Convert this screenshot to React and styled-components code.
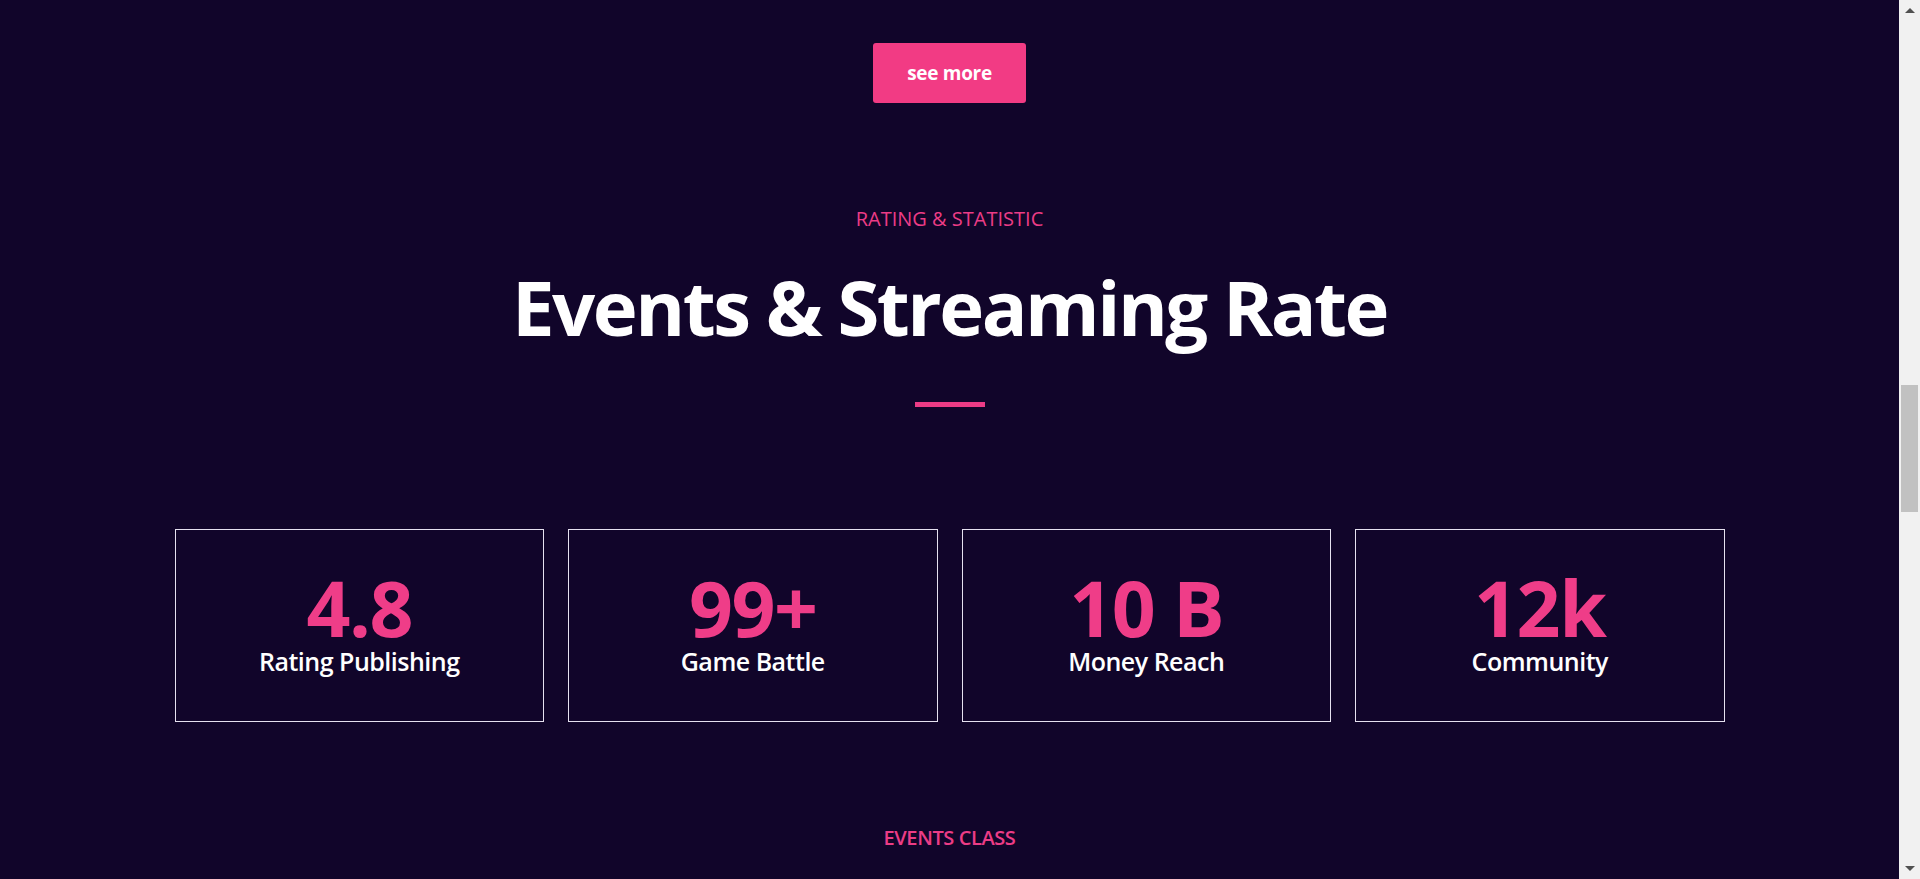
import React from "react";
import styled, { createGlobalStyle } from "styled-components";

const stats = [
  { value: "4.8", label: "Rating Publishing" },
  { value: "99+", label: "Game Battle" },
  { value: "10 B", label: "Money Reach" },
  { value: "12k", label: "Community" },
];

export default function App() {
  return (
    <>
      <GlobalStyle />
      <Page>
        <Main>
          <SeeMore>see more</SeeMore>

          <Eyebrow $gap={106}>RATING &amp; STATISTIC</Eyebrow>
          <Title>Events &amp; Streaming Rate</Title>
          <Divider />

          <StatGrid>
            {stats.map((s) => (
              <StatCard key={s.label}>
                <StatValue>{s.value}</StatValue>
                <StatLabel>{s.label}</StatLabel>
              </StatCard>
            ))}
          </StatGrid>

          <Eyebrow $gap={106} $bold>EVENTS CLASS</Eyebrow>
        </Main>

        <ScrollBar>
          <ScrollArrow $dir="up" />
          <ScrollTrack>
            <ScrollThumb />
          </ScrollTrack>
          <ScrollArrow $dir="down" />
        </ScrollBar>
      </Page>
    </>
  );
}

// Styled components
const GlobalStyle = createGlobalStyle`
  html, body {
    margin: 0;
    padding: 0;
    background: #11052a;
    overflow: hidden;
  }
  * {
    box-sizing: border-box;
  }
`;

const Page = styled.div`
  display: flex;
  height: 100vh;
  background: #11052a;
  font-family: "Open Sans", "Noto Sans", sans-serif;
  overflow: hidden;
`;

const Main = styled.main`
  flex: 1;
  display: flex;
  flex-direction: column;
  align-items: center;
  padding-top: 43px;
  overflow: hidden;
`;

const SeeMore = styled.button`
  width: 153px;
  height: 60px;
  border: none;
  border-radius: 3px;
  background: #f23b84;
  color: #fff;
  font-family: inherit;
  font-size: 19px;
  letter-spacing: -0.3px;
  font-weight: 700;
  cursor: pointer;
`;

const Eyebrow = styled.p`
  margin: ${(p) => p.$gap}px 0 0;
  font-size: 20px;
  line-height: 1;
  font-weight: ${(p) => (p.$bold ? 600 : 500)};
  letter-spacing: ${(p) => (p.$bold ? "-0.4px" : "0")};
  color: #ec3c86;
`;

const Title = styled.h2`
  margin: 40px 0 0;
  font-size: 76px;
  line-height: 1;
  font-weight: 700;
  letter-spacing: -2.5px;
  color: #fff;
`;

const Divider = styled.span`
  display: block;
  width: 70px;
  height: 5px;
  margin-top: 57px;
  background: #ec3c86;
`;

const StatGrid = styled.div`
  display: grid;
  grid-template-columns: repeat(4, 1fr);
  gap: 24px;
  width: 1550px;
  margin-top: 122px;
`;

const StatCard = styled.div`
  height: 193px;
  display: flex;
  flex-direction: column;
  align-items: center;
  justify-content: center;
  gap: 3px;
  padding-bottom: 8px;
  border: 1px solid #e6e1f0;
`;

const StatValue = styled.span`
  font-size: 77px;
  line-height: 1;
  font-weight: 700;
  letter-spacing: -1.5px;
  color: #ef3d88;
`;

const StatLabel = styled.span`
  font-size: 25px;
  line-height: 1;
  font-weight: 600;
  letter-spacing: -0.5px;
  color: #fff;
`;

const ScrollBar = styled.aside`
  width: 21px;
  flex-shrink: 0;
  display: flex;
  flex-direction: column;
  background: #f1f1f1;
`;

const ScrollArrow = styled.div`
  height: 21px;
  display: flex;
  align-items: center;
  justify-content: center;
  &::before {
    content: "";
    border-left: 5px solid transparent;
    border-right: 5px solid transparent;
    ${(p) =>
      p.$dir === "up"
        ? "border-bottom: 5px solid #505050;"
        : "border-top: 5px solid #505050;"}
  }
`;

const ScrollTrack = styled.div`
  flex: 1;
  padding: 0 2px;
`;

const ScrollThumb = styled.div`
  height: 127px;
  margin-top: 364px;
  background: #c1c1c1;
`;
